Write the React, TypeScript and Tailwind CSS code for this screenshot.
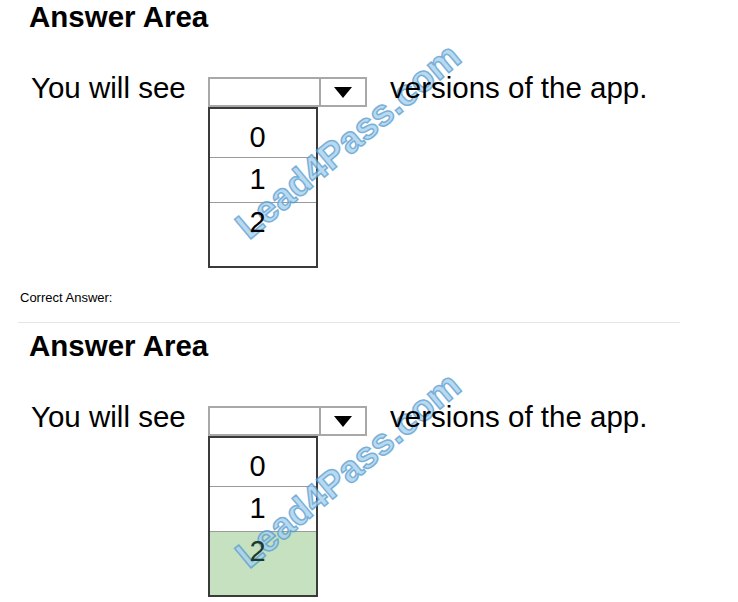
const options = ["0", "1", "2"];

function Watermark() {
  return (
    <span className="pointer-events-none absolute left-[348px] top-[140px] -translate-x-1/2 -translate-y-1/2 -rotate-[40deg] whitespace-nowrap text-[37px] font-bold leading-none text-[#a6d2ee] opacity-80 [-webkit-text-stroke:1.5px_#5a9dcf]">
      Lead4Pass.com
    </span>
  );
}

function AnswerBlock({ selected }: { selected?: number }) {
  return (
    <div className="relative pl-[29px]">
      <h2 className="text-[29.5px] font-bold leading-[32px]">Answer Area</h2>
      <div className="mt-[40px] flex items-start">
        <span className="ml-[2px] w-[177px] text-[29.5px] leading-[30px]">You will see</span>
        <div className="mt-[4px] w-[159px]">
          <div className="flex h-[30px] border-2 border-[#a8a8a8]">
            <div className="flex-1" />
            <div className="flex w-[46px] items-center justify-center border-l-2 border-[#a8a8a8]">
              <svg width="18" height="11" viewBox="0 0 18 11">
                <path d="M0 0 H18 L9 11 Z" fill="#000" />
              </svg>
            </div>
          </div>
          <div className="flex h-[161px] w-[110px] flex-col border-2 border-[#3a3a3a]">
            {options.map((o, i) => (
              <div
                key={o}
                className={[
                  "pr-[11px] text-center text-[29px] leading-none",
                  i === 0 ? "h-[49px] border-b border-[#9a9a9a] pt-[14px]" : "",
                  i === 1 ? "h-[45px] border-b border-[#9a9a9a] pt-[7px]" : "",
                  i === 2 ? "flex-1 pt-[5px]" : "",
                  selected === i ? "bg-[#c5e1c0]" : "",
                ].join(" ")}
              >
                <span className={selected === i ? "relative z-10 text-[#1c3a2c]" : "relative z-10"}>{o}</span>
              </div>
            ))}
          </div>
        </div>
        <span className="relative z-10 ml-[23px] text-[29.5px] leading-[30px]">versions of the app.</span>
      </div>
      <Watermark />
    </div>
  );
}

export default function App() {
  return (
    <div className="h-[602px] w-[738px] overflow-hidden bg-white pt-[1px] font-['Liberation_Sans',Arial,sans-serif] text-black">
      <AnswerBlock />
      <div className="mt-[22px] pl-[20px] text-[13px] leading-[16px]">Correct Answer:</div>
      <div className="ml-[18px] mt-[16px] h-px w-[662px] bg-[#e6e6e6]" />
      <div className="mt-[7px]">
        <AnswerBlock selected={2} />
      </div>
    </div>
  );
}
